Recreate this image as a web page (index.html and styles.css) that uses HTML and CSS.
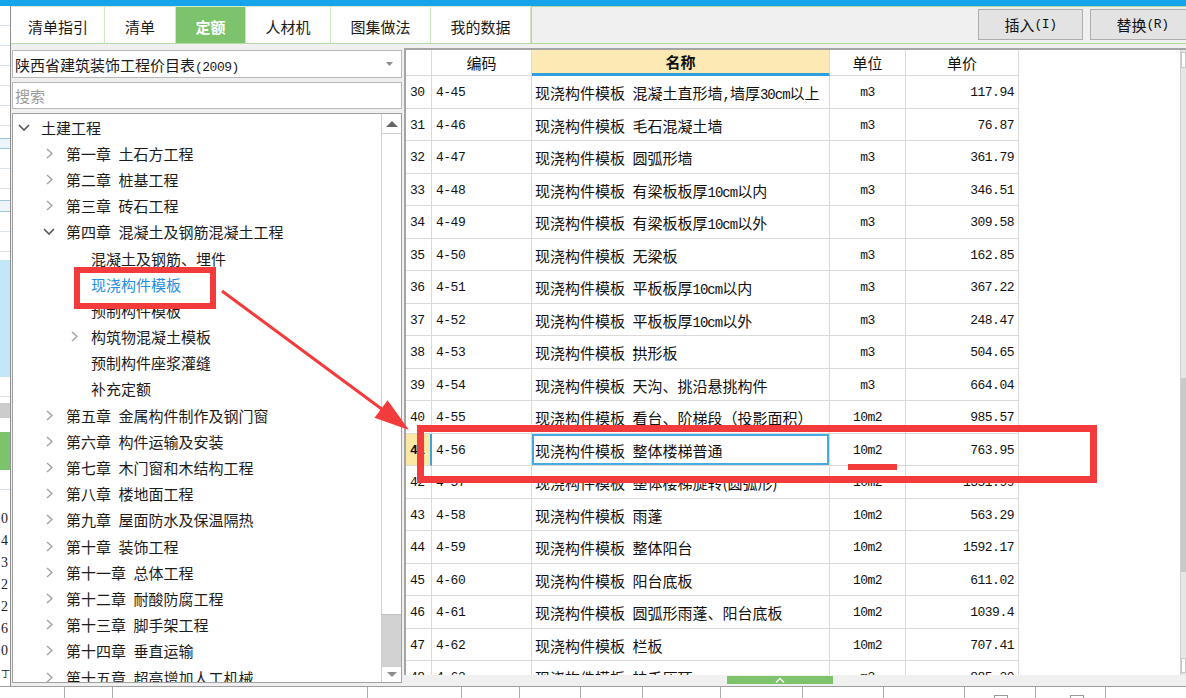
FILE: index.html
```html
<!DOCTYPE html>
<html lang="zh-CN">
<head>
<meta charset="utf-8">
<title>定额</title>
<link rel="stylesheet" href="styles.css">
</head>
<body>
<div class="topbar"></div>
<div class="frame">
  <div class="strip">
    <div class="seg lines h132"></div>
    <div class="seg box h11"></div>
    <div class="seg lines h51"></div>
    <div class="seg box h12"></div>
    <div class="seg lines h48"></div>
    <div class="seg blue h117"></div>
    <div class="seg lines h26"></div>
    <div class="seg grey h15"></div>
    <div class="seg h14"></div>
    <div class="seg green h38"></div>
    <div class="seg lines h38"></div>
    <div class="seg digits h178">0<br>4<br>3<br>2<br>2<br>6<br>0<br><span class="ding">丁</span></div>
  </div>
  <div class="main">
    <div class="tabbar">
      <div class="tabs">
        <div class="tab t1">清单指引</div>
        <div class="tab t2">清单</div>
        <div class="tab t3 active">定额</div>
        <div class="tab t4">人材机</div>
        <div class="tab t5">图集做法</div>
        <div class="tab t6">我的数据</div>
      </div>
      <div class="toolbar">
        <div class="btn">插入<span class="mono">(I)</span></div>
        <div class="btn">替换<span class="mono">(R)</span></div>
      </div>
    </div>
    <div class="content">
      <div class="leftpane">
        <div class="select">
          <span>陕西省建筑装饰工程价目表<span class="mono">(2009)</span></span>
          <svg width="7" height="4" viewBox="0 0 7 4"><polygon points="0,0 7,0 3.5,4" fill="#8a8a8a"/></svg>
        </div>
        <div class="search">搜索</div>
        <div class="tree">
          <div class="tree-list">
            <div class="trow l0"><span class="chev"><svg width="12" height="7" viewBox="0 0 12 7"><polyline points="1,1 6,6 11,1" fill="none" stroke="#555" stroke-width="1.6"/></svg></span><span>土建工程</span></div>
            <div class="trow l1"><span class="chev"><svg width="7" height="11" viewBox="0 0 7 11"><polyline points="1,1 6,5.5 1,10" fill="none" stroke="#a3a3a3" stroke-width="1.5"/></svg></span><span>第一章&ensp;土石方工程</span></div>
            <div class="trow l1"><span class="chev"><svg width="7" height="11" viewBox="0 0 7 11"><polyline points="1,1 6,5.5 1,10" fill="none" stroke="#a3a3a3" stroke-width="1.5"/></svg></span><span>第二章&ensp;桩基工程</span></div>
            <div class="trow l1"><span class="chev"><svg width="7" height="11" viewBox="0 0 7 11"><polyline points="1,1 6,5.5 1,10" fill="none" stroke="#a3a3a3" stroke-width="1.5"/></svg></span><span>第三章&ensp;砖石工程</span></div>
            <div class="trow l1"><span class="chev"><svg width="12" height="7" viewBox="0 0 12 7"><polyline points="1,1 6,6 11,1" fill="none" stroke="#555" stroke-width="1.6"/></svg></span><span>第四章&ensp;混凝土及钢筋混凝土工程</span></div>
            <div class="trow l2"><span class="chev"></span><span>混凝土及钢筋、埋件</span></div>
            <div class="trow l2"><span class="chev"></span><span class="sel">现浇构件模板</span></div>
            <div class="trow l2"><span class="chev"></span><span>预制构件模板</span></div>
            <div class="trow l2"><span class="chev"><svg width="7" height="11" viewBox="0 0 7 11"><polyline points="1,1 6,5.5 1,10" fill="none" stroke="#a3a3a3" stroke-width="1.5"/></svg></span><span>构筑物混凝土模板</span></div>
            <div class="trow l2"><span class="chev"></span><span>预制构件座浆灌缝</span></div>
            <div class="trow l2"><span class="chev"></span><span>补充定额</span></div>
            <div class="trow l1"><span class="chev"><svg width="7" height="11" viewBox="0 0 7 11"><polyline points="1,1 6,5.5 1,10" fill="none" stroke="#a3a3a3" stroke-width="1.5"/></svg></span><span>第五章&ensp;金属构件制作及钢门窗</span></div>
            <div class="trow l1"><span class="chev"><svg width="7" height="11" viewBox="0 0 7 11"><polyline points="1,1 6,5.5 1,10" fill="none" stroke="#a3a3a3" stroke-width="1.5"/></svg></span><span>第六章&ensp;构件运输及安装</span></div>
            <div class="trow l1"><span class="chev"><svg width="7" height="11" viewBox="0 0 7 11"><polyline points="1,1 6,5.5 1,10" fill="none" stroke="#a3a3a3" stroke-width="1.5"/></svg></span><span>第七章&ensp;木门窗和木结构工程</span></div>
            <div class="trow l1"><span class="chev"><svg width="7" height="11" viewBox="0 0 7 11"><polyline points="1,1 6,5.5 1,10" fill="none" stroke="#a3a3a3" stroke-width="1.5"/></svg></span><span>第八章&ensp;楼地面工程</span></div>
            <div class="trow l1"><span class="chev"><svg width="7" height="11" viewBox="0 0 7 11"><polyline points="1,1 6,5.5 1,10" fill="none" stroke="#a3a3a3" stroke-width="1.5"/></svg></span><span>第九章&ensp;屋面防水及保温隔热</span></div>
            <div class="trow l1"><span class="chev"><svg width="7" height="11" viewBox="0 0 7 11"><polyline points="1,1 6,5.5 1,10" fill="none" stroke="#a3a3a3" stroke-width="1.5"/></svg></span><span>第十章&ensp;装饰工程</span></div>
            <div class="trow l1"><span class="chev"><svg width="7" height="11" viewBox="0 0 7 11"><polyline points="1,1 6,5.5 1,10" fill="none" stroke="#a3a3a3" stroke-width="1.5"/></svg></span><span>第十一章&ensp;总体工程</span></div>
            <div class="trow l1"><span class="chev"><svg width="7" height="11" viewBox="0 0 7 11"><polyline points="1,1 6,5.5 1,10" fill="none" stroke="#a3a3a3" stroke-width="1.5"/></svg></span><span>第十二章&ensp;耐酸防腐工程</span></div>
            <div class="trow l1"><span class="chev"><svg width="7" height="11" viewBox="0 0 7 11"><polyline points="1,1 6,5.5 1,10" fill="none" stroke="#a3a3a3" stroke-width="1.5"/></svg></span><span>第十三章&ensp;脚手架工程</span></div>
            <div class="trow l1"><span class="chev"><svg width="7" height="11" viewBox="0 0 7 11"><polyline points="1,1 6,5.5 1,10" fill="none" stroke="#a3a3a3" stroke-width="1.5"/></svg></span><span>第十四章&ensp;垂直运输</span></div>
            <div class="trow l1"><span class="chev"><svg width="7" height="11" viewBox="0 0 7 11"><polyline points="1,1 6,5.5 1,10" fill="none" stroke="#a3a3a3" stroke-width="1.5"/></svg></span><span>第十五章&ensp;超高增加人工机械</span></div>
          </div>
          <div class="vscroll">
            <div class="sb-up"><svg width="12" height="6" viewBox="0 0 12 6"><polygon points="0,6 12,6 6,0" fill="#666"/></svg></div>
            <div class="sb-track"><div class="sb-thumb"></div></div>
            <div class="sb-down"><svg width="10" height="5" viewBox="0 0 10 5"><polygon points="0,0 10,0 5,5" fill="#8c8c8c"/></svg></div>
          </div>
        </div>
      </div>
      <div class="rightpane">
        <div class="grid">
          <div class="gbody">
            <div class="ghead">
              <div class="c"></div>
              <div class="c hc">编码</div>
              <div class="c hc hname">名称</div>
              <div class="c hc">单位</div>
              <div class="c hc">单价</div>
            </div>
            <div class="grow"><div class="c num mono">30</div><div class="c code mono">4-45</div><div class="c name"><span>现浇构件模板&ensp;混凝土直形墙<span class="mono">,</span>墙厚<span class="mono">30cm</span>以上</span></div><div class="c unit mono">m3</div><div class="c price mono">117.94</div></div>
            <div class="grow"><div class="c num mono">31</div><div class="c code mono">4-46</div><div class="c name"><span>现浇构件模板&ensp;毛石混凝土墙</span></div><div class="c unit mono">m3</div><div class="c price mono">76.87</div></div>
            <div class="grow"><div class="c num mono">32</div><div class="c code mono">4-47</div><div class="c name"><span>现浇构件模板&ensp;圆弧形墙</span></div><div class="c unit mono">m3</div><div class="c price mono">361.79</div></div>
            <div class="grow"><div class="c num mono">33</div><div class="c code mono">4-48</div><div class="c name"><span>现浇构件模板&ensp;有梁板板厚<span class="mono">10cm</span>以内</span></div><div class="c unit mono">m3</div><div class="c price mono">346.51</div></div>
            <div class="grow"><div class="c num mono">34</div><div class="c code mono">4-49</div><div class="c name"><span>现浇构件模板&ensp;有梁板板厚<span class="mono">10cm</span>以外</span></div><div class="c unit mono">m3</div><div class="c price mono">309.58</div></div>
            <div class="grow"><div class="c num mono">35</div><div class="c code mono">4-50</div><div class="c name"><span>现浇构件模板&ensp;无梁板</span></div><div class="c unit mono">m3</div><div class="c price mono">162.85</div></div>
            <div class="grow"><div class="c num mono">36</div><div class="c code mono">4-51</div><div class="c name"><span>现浇构件模板&ensp;平板板厚<span class="mono">10cm</span>以内</span></div><div class="c unit mono">m3</div><div class="c price mono">367.22</div></div>
            <div class="grow"><div class="c num mono">37</div><div class="c code mono">4-52</div><div class="c name"><span>现浇构件模板&ensp;平板板厚<span class="mono">10cm</span>以外</span></div><div class="c unit mono">m3</div><div class="c price mono">248.47</div></div>
            <div class="grow"><div class="c num mono">38</div><div class="c code mono">4-53</div><div class="c name"><span>现浇构件模板&ensp;拱形板</span></div><div class="c unit mono">m3</div><div class="c price mono">504.65</div></div>
            <div class="grow"><div class="c num mono">39</div><div class="c code mono">4-54</div><div class="c name"><span>现浇构件模板&ensp;天沟、挑沿悬挑构件</span></div><div class="c unit mono">m3</div><div class="c price mono">664.04</div></div>
            <div class="grow"><div class="c num mono">40</div><div class="c code mono">4-55</div><div class="c name"><span>现浇构件模板&ensp;看台、阶梯段（投影面积）</span></div><div class="c unit mono">10m2</div><div class="c price mono">985.57</div></div>
            <div class="grow rsel"><div class="c num mono">41</div><div class="c code mono">4-56</div><div class="c name"><span>现浇构件模板&ensp;整体楼梯普通</span></div><div class="c unit mono">10m2</div><div class="c price mono">763.95</div></div>
            <div class="grow"><div class="c num mono">42</div><div class="c code mono">4-57</div><div class="c name"><span>现浇构件模板&ensp;整体楼梯旋转(圆弧形)</span></div><div class="c unit mono">10m2</div><div class="c price mono">1351.99</div></div>
            <div class="grow"><div class="c num mono">43</div><div class="c code mono">4-58</div><div class="c name"><span>现浇构件模板&ensp;雨蓬</span></div><div class="c unit mono">10m2</div><div class="c price mono">563.29</div></div>
            <div class="grow"><div class="c num mono">44</div><div class="c code mono">4-59</div><div class="c name"><span>现浇构件模板&ensp;整体阳台</span></div><div class="c unit mono">10m2</div><div class="c price mono">1592.17</div></div>
            <div class="grow"><div class="c num mono">45</div><div class="c code mono">4-60</div><div class="c name"><span>现浇构件模板&ensp;阳台底板</span></div><div class="c unit mono">10m2</div><div class="c price mono">611.02</div></div>
            <div class="grow"><div class="c num mono">46</div><div class="c code mono">4-61</div><div class="c name"><span>现浇构件模板&ensp;圆弧形雨蓬、阳台底板</span></div><div class="c unit mono">10m2</div><div class="c price mono">1039.4</div></div>
            <div class="grow"><div class="c num mono">47</div><div class="c code mono">4-62</div><div class="c name"><span>现浇构件模板&ensp;栏板</span></div><div class="c unit mono">10m2</div><div class="c price mono">707.41</div></div>
            <div class="grow"><div class="c num mono">48</div><div class="c code mono">4-63</div><div class="c name"><span>现浇构件模板&ensp;扶手压顶</span></div><div class="c unit mono">m3</div><div class="c price mono">885.30</div></div>
          </div>
          <div class="gscroll">
            <div class="gs-up"></div>
            <div class="gs-gap1"></div>
            <div class="gs-thumb"></div>
            <div class="gs-gap2"></div>
            <div class="gs-down"></div>
          </div>
        </div>
        <div class="hrow">
          <div class="handle"><svg width="10" height="6" viewBox="0 0 10 6"><polyline points="1,5.5 5,1.5 9,5.5" fill="none" stroke="#fff" stroke-width="1.4"/></svg></div>
        </div>
      </div>
    </div>
  </div>
</div>
<div class="status">
  <div class="sc w65"></div>
  <div class="sc w48"></div>
  <div class="sc w255"></div>
  <div class="sc w94"></div>
  <div class="sc w58"></div>
  <div class="sc w61"></div>
  <div class="sc w62"></div>
  <div class="sc w78"></div>
  <div class="sc w82"></div>
  <div class="sc w81"></div>
  <div class="sc w81"></div>
  <div class="sc w71"><div class="ico i1"></div></div>
  <div class="sc w70"><div class="ico i2"></div></div>
  <div class="sc rest"></div>
</div>
<svg class="overlay" width="1186" height="698" viewBox="0 0 1186 698">
  <rect x="77" y="270" width="136" height="36" fill="none" stroke="#f43b3b" stroke-width="6"/>
  <line x1="222" y1="291" x2="383" y2="410" stroke="#f43b3b" stroke-width="3"/>
  <polygon points="409,430 374.5,417.8 387.6,400.2" fill="#f43b3b"/>
  <rect x="420.5" y="428.5" width="673" height="51" fill="none" stroke="#f43b3b" stroke-width="7"/>
  <rect x="848" y="464" width="49" height="6" fill="#f43b3b"/>
</svg>
</body>
</html>
```
FILE: styles.css
```css
* { box-sizing: border-box; margin: 0; padding: 0; }
html, body { width: 1186px; height: 698px; overflow: hidden; }
body {
  position: relative;
  font-family: "Noto Sans CJK SC", "Noto Sans", sans-serif;
  font-size: 15px;
  color: #1a1a1a;
  background: #f0f0f0;
}
.mono {
  font-family: "Liberation Mono", "DejaVu Sans Mono", monospace;
  font-size: 13px;
  letter-spacing: -0.5px;
}
.name .mono { font-size: 14px; letter-spacing: -1px; }

.topbar { height: 6px; background: #15a3e9; }
.frame { display: flex; height: 680px; }

/* background window strip */
.strip {
  width: 11px; flex: none; display: flex; flex-direction: column;
  overflow: hidden; background: #fff; border-right: 1px solid #8e8e8e;
}
.seg { flex: none; }
.lines { background: repeating-linear-gradient(to bottom, #fff 0, #fff 19px, #d6e3ec 19px, #d6e3ec 20px); }
.box { background: #eef5fa; border-top: 1px solid #9cc4dc; border-bottom: 1px solid #9cc4dc; }
.blue { background: #c2e7f8; }
.grey { background: #cccccc; }
.green { background: #7cc36b; }
.digits {
  font-family: "Liberation Serif", "Noto Sans CJK SC", serif;
  font-size: 14px; line-height: 22px; padding-left: 1px; color: #222;
}
.ding { font-family: "Noto Sans CJK SC", sans-serif; font-size: 9px; }
.h11 { height: 11px; } .h12 { height: 12px; } .h14 { height: 14px; } .h15 { height: 15px; }
.h26 { height: 26px; } .h38 { height: 38px; } .h48 { height: 48px; } .h51 { height: 51px; }
.h117 { height: 117px; } .h132 { height: 132px; } .h178 { height: 178px; }

.main { flex: 1; min-width: 0; display: flex; flex-direction: column; }

/* tabs */
.tabbar { height: 38px; flex: none; display: flex; }
.tabs { display: flex; padding-left: 1px; background: #fff; border-bottom: 1px solid #b5dba8; border-top: 1px solid #d6ecce; }
.tab {
  flex: none; height: 100%; display: flex; align-items: center; justify-content: center;
  padding-top: 3px; border-right: 1px solid #cde7c3; color: #1a1a1a;
}
.tab.active { background: #7cc36b; color: #fff; font-weight: 700; }
.t1 { width: 93px; } .t2 { width: 71px; } .t3 { width: 70px; }
.t4 { width: 85px; } .t5 { width: 100px; } .t6 { width: 100px; }
.toolbar {
  flex: 1; min-width: 0; display: flex; gap: 7px; overflow: hidden;
  padding: 2px 0 0 446px; background: #f0f0f0;
  border: 1px solid #acdb9d; border-right: 0;
}
.btn {
  flex: none; width: 105px; height: 31px; display: flex; align-items: center; justify-content: center;
  background: #e3e3e3; border: 1px solid #adadad; color: #111;
}

/* content */
.content { flex: 1; min-height: 0; display: flex; }
.leftpane { width: 391px; flex: none; padding: 6px 0 0 1px; display: flex; flex-direction: column; gap: 4px; }
.select {
  height: 28px; flex: none; background: #fff; border: 1px solid #b8b8b8;
  display: flex; align-items: center; justify-content: space-between; padding: 0 8px 0 2px;
}
.search {
  height: 27px; flex: none; background: #fff; border: 1px solid #b8b8b8;
  display: flex; align-items: center; padding-left: 2px; color: #9b9b9b;
}
.tree { height: 570px; flex: none; background: #fff; border: 1px solid #a2a2a2; display: flex; overflow: hidden; }
.tree-list { flex: 1; min-width: 0; overflow: hidden; }
.trow { height: 26.2px; display: flex; align-items: center; white-space: nowrap; color: #1c1c1c; }
.l1 { padding-left: 25px; }
.l2 { padding-left: 50px; }
.chev { width: 22px; flex: none; display: flex; align-items: center; justify-content: center; margin-right: 6px; }
.sel { color: #1f8fe5; }
.vscroll { width: 20px; flex: none; border-left: 1px solid #cfcfcf; display: flex; flex-direction: column; }
.sb-up { height: 20px; flex: none; border-bottom: 1px solid #cfcfcf; display: flex; align-items: center; justify-content: center; }
.sb-track { flex: 1; background: #d2d2d2; display: flex; flex-direction: column; }
.sb-thumb { height: 481px; background: #fff; border-bottom: 1px solid #bdbdbd; }
.sb-down { height: 16px; flex: none; border-top: 1px solid #cfcfcf; display: flex; align-items: center; justify-content: center; }

/* grid */
.rightpane { flex: 1; min-width: 0; margin-left: 2px; padding-top: 4px; display: flex; flex-direction: column; }
.grid {
  height: 627px; flex: none; display: flex; overflow: hidden; background: #fff;
  border-top: 2px solid #a5a5a5; border-left: 2px solid #a5a5a5;
}
.gbody { flex: 1; min-width: 0; overflow: hidden; }
.ghead, .grow { display: grid; grid-template-columns: 26px 100px 298px 76px 113px; }
.ghead { height: 26px; }
.grow { height: 32.5px; }
.c {
  min-width: 0; overflow: hidden; white-space: nowrap; display: flex; align-items: center;
  border-right: 1px solid #dadada; border-bottom: 1px solid #dadada; color: #111;
}
.grow .c { padding-top: 2px; }
.hc { justify-content: center; }
.hname { background: #fde9b3; font-weight: 700; border-bottom: 3px solid #2c9fdc; }
.num, .code { padding-left: 4px; }
.name { padding-left: 3px; }
.unit { justify-content: center; }
.price { justify-content: flex-end; padding-right: 4px; }
.rsel .num { background: #fde7a5; font-weight: 700; border-right: 2px solid #3aa3da; }
.rsel .name { box-shadow: inset 0 0 0 2px #45aadd; }

.gscroll { width: 6px; flex: none; background: #e6e6e6; border-left: 1px solid #d0d0d0; display: flex; flex-direction: column; }
.gs-up { height: 16px; flex: none; margin-top: 2px; background: #fff; border: 1px solid #c8c8c8; }
.gs-gap1 { height: 310px; flex: none; }
.gs-thumb { height: 194px; flex: none; background: #c9c9c9; }
.gs-gap2 { flex: 1; }
.gs-down { height: 15px; flex: none; margin-bottom: 2px; background: #fff; border: 1px solid #c8c8c8; }

.hrow { height: 11px; flex: none; padding: 1px 0 0 323px; }
.handle { width: 106px; height: 8px; background: #7cc36b; display: flex; align-items: center; justify-content: center; }

/* status strip */
.status { height: 12px; display: flex; border-top: 1px solid #9f9f9f; background: #fff; overflow: hidden; }
.sc { flex: none; height: 100%; border-right: 1px solid #acacac; }
.sc.rest { flex: 1; border-right: 0; }
.w48 { width: 48px; } .w58 { width: 58px; } .w61 { width: 61px; } .w62 { width: 62px; }
.w65 { width: 65px; } .w70 { width: 70px; } .w71 { width: 71px; } .w78 { width: 78px; }
.w81 { width: 81px; } .w82 { width: 82px; } .w94 { width: 94px; } .w255 { width: 255px; }
.ico { width: 14px; height: 4px; border: 1px solid #999; border-bottom: 0; margin-top: 8px; }
.i1 { margin-left: 29px; }
.i2 { margin-left: 34px; }

.overlay { position: absolute; left: 0; top: 0; pointer-events: none; }
```
